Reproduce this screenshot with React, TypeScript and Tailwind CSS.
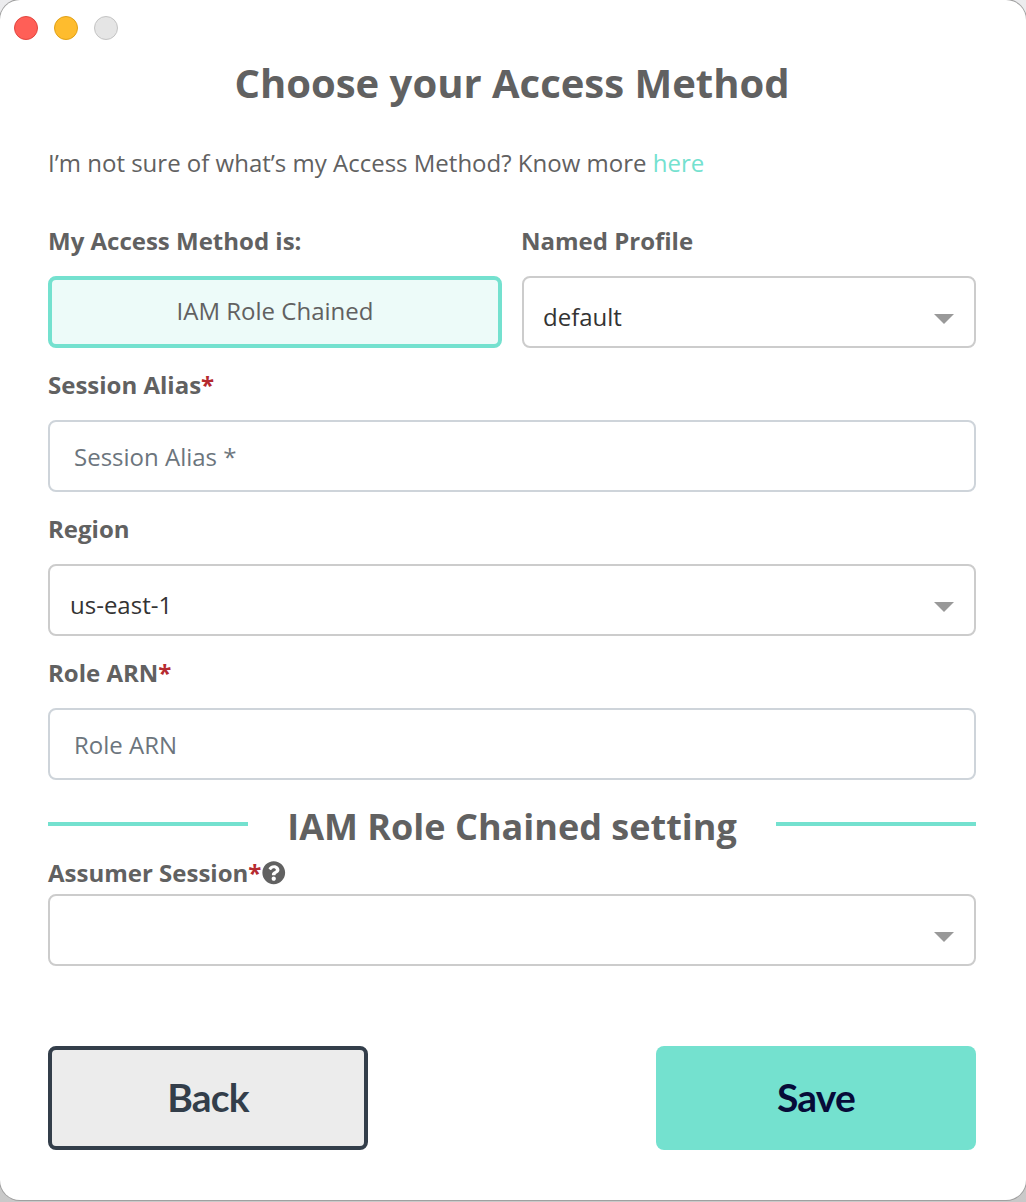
import React from "react";
import { FaQuestionCircle } from "react-icons/fa";

const font = "font-['Open_Sans',sans-serif]";

function Label({ text, required = false, help = false }: { text: string; required?: boolean; help?: boolean }) {
  return (
    <div className="flex h-[34px] items-center text-[24px] font-bold leading-[34px] text-[#616161]">
      <span>{text}</span>
      {required && <span className="text-[#b52a2f]">*</span>}
      {help && <FaQuestionCircle className="ml-px size-[23.5px] text-[#616161]" />}
    </div>
  );
}

function Select({ value, pad = "pl-5" }: { value: string; pad?: string }) {
  return (
    <div className={`flex h-[72px] items-center justify-between rounded-lg border-2 border-[#cccccc] pr-5 pt-3.5 text-[24px] leading-[34px] text-[#333] ${pad}`}>
      <span className="-mt-1">{value}</span>
      <span className="border-x-[10px] border-t-[10px] border-x-transparent border-t-[#999]" />
    </div>
  );
}

function Field({ placeholder }: { placeholder: string }) {
  return (
    <input
      placeholder={placeholder}
      className="block h-[72px] w-full rounded-lg border-2 border-[#ced4da] px-6 text-[24px] placeholder:text-[#6c757d]"
    />
  );
}

export default function App() {
  return (
    <div className="h-[1202px] w-[1026px] overflow-hidden bg-linear-to-b from-[#ececee] to-[#c9c9c9]">
      <main className={`flex h-[1200px] flex-col rounded-[20px] bg-white pl-12 pr-[50px] text-[#616161] shadow-[0_0_0_1px_#a0a0a0] ${font}`}>
        <div className="-ml-[34px] flex h-14 items-center gap-4">
          <span className="size-6 rounded-full border border-[#e2463f] bg-[#ff5f57]" />
          <span className="size-6 rounded-full border border-[#e1a116] bg-[#febc2e]" />
          <span className="size-6 rounded-full border border-[#c4c4c4] bg-[#e5e5e5]" />
        </div>
        <h1 className="h-[54px] text-center text-[40px] font-bold leading-[54px]">Choose your Access Method</h1>
        <p className="mt-9 h-[34px] text-[24px] leading-[34px]">
          I’m not sure of what’s my Access Method? Know more <a className="text-[#74e1cf]">here</a>
        </p>
        <div className="mt-11 grid grid-cols-2 gap-5">
          <div>
            <Label text="My Access Method is:" />
            <div className="mt-[18px] flex h-[72px] items-center justify-center rounded-lg border-4 border-[#74e1cf] bg-[#edfbf9] pb-0.5 text-[24px]">
              IAM Role Chained
            </div>
          </div>
          <div>
            <div className="-ml-px"><Label text="Named Profile" /></div>
            <div className="mt-[18px]"><Select value="default" pad="pl-[19px]" /></div>
          </div>
        </div>
        <div className="mt-5"><Label text="Session Alias" required /></div>
        <div className="mt-[18px]"><Field placeholder="Session Alias *" /></div>
        <div className="mt-5"><Label text="Region" /></div>
        <div className="mt-[18px]"><Select value="us-east-1" /></div>
        <div className="mt-5"><Label text="Role ARN" required /></div>
        <div className="mt-[18px]"><Field placeholder="Role ARN" /></div>
        <div className="mt-5 flex h-14 items-center justify-between">
          <span className="-mt-2 h-1 w-[200px] bg-[#74e1cf]" />
          <h2 className="-mt-0.5 text-[36px] font-bold leading-[54px]">IAM Role Chained setting</h2>
          <span className="-mt-2 h-1 w-[200px] bg-[#74e1cf]" />
        </div>
        <Label text="Assumer Session" required help />
        <div className="mt-1"><Select value="" /></div>
        <div className="mt-20 flex justify-between font-['Lato',sans-serif] text-[39px] font-bold leading-[56px] tracking-[-0.02em]">
          <button className="h-[104px] w-80 rounded-lg border-4 border-[#333e4a] bg-[#ececec] pb-0.5 text-[#333e4a]">Back</button>
          <button className="h-[104px] w-80 rounded-lg bg-[#74e1cf] pb-0.5 text-[#060b38]">Save</button>
        </div>
      </main>
    </div>
  );
}
